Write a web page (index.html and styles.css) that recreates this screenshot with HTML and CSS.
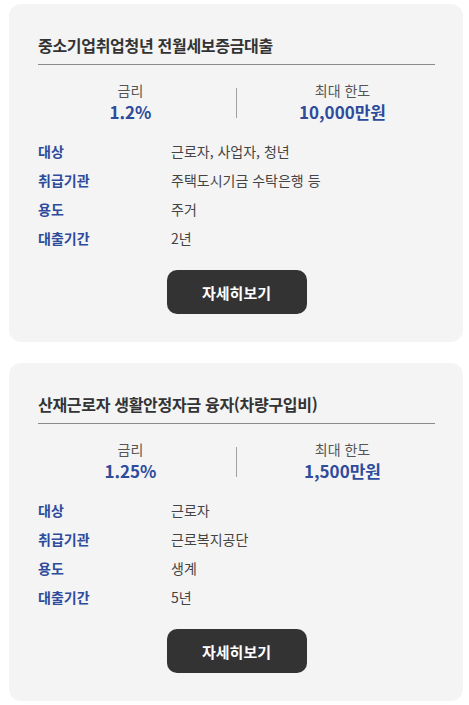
FILE: index.html
```html
<!DOCTYPE html>
<html lang="ko">
<head>
<meta charset="utf-8">
<link rel="stylesheet" href="styles.css">
</head>
<body>
<div class="list">
  <section class="card">
    <h2 class="title">중소기업취업청년 전월세보증금대출</h2>
    <div class="stats">
      <div class="stat">
        <div class="stat-label">금리</div>
        <div class="stat-value">1.2%</div>
      </div>
      <div class="stat-sep"></div>
      <div class="stat">
        <div class="stat-label">최대 한도</div>
        <div class="stat-value">10,000만원</div>
      </div>
    </div>
    <dl class="rows">
      <div class="row"><dt>대상</dt><dd>근로자, 사업자, 청년</dd></div>
      <div class="row"><dt>취급기관</dt><dd>주택도시기금 수탁은행 등</dd></div>
      <div class="row"><dt>용도</dt><dd>주거</dd></div>
      <div class="row"><dt>대출기간</dt><dd>2년</dd></div>
    </dl>
    <div class="actions"><button class="btn">자세히보기</button></div>
  </section>
  <section class="card">
    <h2 class="title">산재근로자 생활안정자금 융자(차량구입비)</h2>
    <div class="stats">
      <div class="stat">
        <div class="stat-label">금리</div>
        <div class="stat-value">1.25%</div>
      </div>
      <div class="stat-sep"></div>
      <div class="stat">
        <div class="stat-label">최대 한도</div>
        <div class="stat-value">1,500만원</div>
      </div>
    </div>
    <dl class="rows">
      <div class="row"><dt>대상</dt><dd>근로자</dd></div>
      <div class="row"><dt>취급기관</dt><dd>근로복지공단</dd></div>
      <div class="row"><dt>용도</dt><dd>생계</dd></div>
      <div class="row"><dt>대출기간</dt><dd>5년</dd></div>
    </dl>
    <div class="actions"><button class="btn">자세히보기</button></div>
  </section>
</div>
</body>
</html>
```
FILE: styles.css
```css
* { box-sizing: border-box; }
html, body { margin: 0; padding: 0; background: #fff; }
body {
  font-family: "Noto Sans CJK KR", "Noto Sans", sans-serif;
  color: #333;
}
.list {
  display: flex;
  flex-direction: column;
  gap: 21px;
  padding: 4px 6px 0 9px;
}
.card {
  background: #f4f4f4;
  border-radius: 12px;
  padding: 30px 15px 28px 16px;
}
.title {
  margin: 0 13px;
  padding-bottom: 8px;
  border-bottom: 1px solid #8a8a8a;
  font-size: 16px;
  line-height: 22px;
  font-weight: 700;
  color: #333;
  letter-spacing: -0.3px;
}
.stats {
  display: flex;
  align-items: center;
  margin-top: 15px;
}
.stat {
  flex: 1;
  text-align: center;
}
.stat-label {
  font-size: 14px;
  line-height: 20px;
  color: #555;
}
.stat-value {
  font-size: 17px;
  line-height: 24px;
  font-weight: 700;
  color: #2e4b9c;
}
.stat-sep {
  width: 1px;
  height: 30px;
  background: #a0a0a0;
  margin-top: 2px;
}
.rows {
  margin: 12px 13px 0;
  padding: 0;
}
.row {
  display: flex;
  height: 29px;
  align-items: center;
  font-size: 14px;
}
.row dt {
  width: 133px;
  font-weight: 700;
  color: #2e4b9c;
}
.row dd {
  margin: 0;
  color: #444;
}
.actions {
  display: flex;
  justify-content: center;
  margin-top: 18px;
}
.btn {
  width: 140px;
  height: 44px;
  border: 0;
  border-radius: 10px;
  background: #333;
  color: #fff;
  font-family: inherit;
  font-size: 15px;
  font-weight: 700;
}
```
